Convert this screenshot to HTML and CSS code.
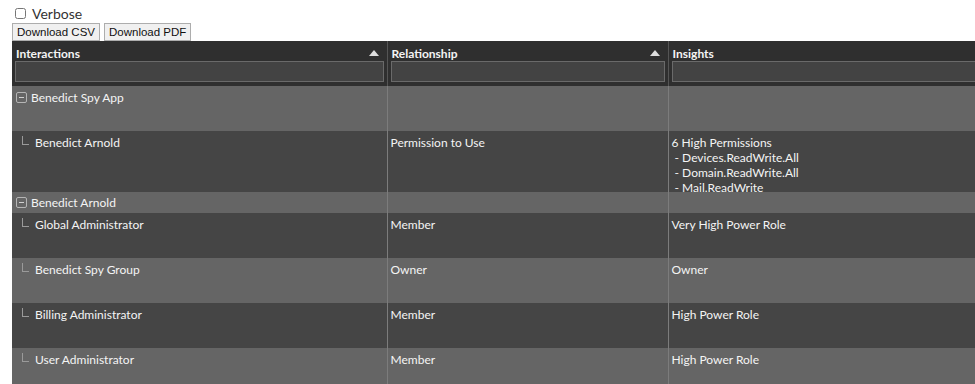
FILE: index.html
```html
<!DOCTYPE html>
<html lang="en">
<head>
  <meta charset="UTF-8" />
  <meta name="viewport" content="width=device-width, initial-scale=1" />
  <title>Interactions</title>
  <link rel="stylesheet" href="styles.css">
</head>
<body>
  <label class="verbose"><input type="checkbox" /> Verbose</label>
  <div class="toolbar">
    <button>Download CSV</button>
    <button>Download PDF</button>
  </div>
  <div class="grid">
    <table>
      <colgroup>
        <col class="c1" />
        <col class="c2" />
        <col class="c3" />
      </colgroup>
      <thead>
        <tr>
          <th><div class="title">Interactions<span class="sort"></span></div><input type="text" /></th>
          <th><div class="title">Relationship<span class="sort"></span></div><input type="text" /></th>
          <th><div class="title">Insights<span class="sort"></span></div><input type="text" /></th>
        </tr>
      </thead>
      <tbody>
        <tr class="group">
          <td><div class="cell tall"><span class="toggle"></span>Benedict Spy App</div></td>
          <td><div class="cell tall"></div></td>
          <td><div class="cell tall"></div></td>
        </tr>
        <tr class="row dark">
          <td><div class="cell big"><span class="branch"></span>Benedict Arnold</div></td>
          <td><div class="cell big">Permission to Use</div></td>
          <td><div class="cell big">6 High Permissions<br>&nbsp;- Devices.ReadWrite.All<br>&nbsp;- Domain.ReadWrite.All<br>&nbsp;- Mail.ReadWrite</div></td>
        </tr>
        <tr class="group">
          <td><div class="cell short"><span class="toggle"></span>Benedict Arnold</div></td>
          <td><div class="cell short"></div></td>
          <td><div class="cell short"></div></td>
        </tr>
        <tr class="row dark">
          <td><div class="cell"><span class="branch"></span>Global Administrator</div></td>
          <td><div class="cell">Member</div></td>
          <td><div class="cell">Very High Power Role</div></td>
        </tr>
        <tr class="row light">
          <td><div class="cell"><span class="branch"></span>Benedict Spy Group</div></td>
          <td><div class="cell">Owner</div></td>
          <td><div class="cell">Owner</div></td>
        </tr>
        <tr class="row dark">
          <td><div class="cell"><span class="branch"></span>Billing Administrator</div></td>
          <td><div class="cell">Member</div></td>
          <td><div class="cell">High Power Role</div></td>
        </tr>
        <tr class="row light">
          <td><div class="cell"><span class="branch"></span>User Administrator</div></td>
          <td><div class="cell">Member</div></td>
          <td><div class="cell">High Power Role</div></td>
        </tr>
      </tbody>
    </table>
  </div>
</body>
</html>
```

FILE: styles.css
```css
html {
  overflow: hidden;
}
body {
  margin: 0;
  padding: 6px 0 0 12px;
  font-family: Lato, "Open Sans", sans-serif;
  background: #fff;
  color: #222;
}
.verbose {
  display: flex;
  align-items: center;
  height: 14px;
  font-size: 14px;
  color: #333;
}
.verbose input {
  margin: 0 6px 0 3px;
  width: 11px;
  height: 11px;
}
.toolbar {
  display: flex;
  gap: 4px;
  margin-top: 3px;
}
.toolbar button {
  font-family: "Liberation Sans", Arial, sans-serif;
  font-size: 11.5px;
  height: 18px;
  padding: 0 4px;
  background: #f0f0f0;
  border: 1px solid #adadad;
  border-radius: 0;
  color: #111;
}
table {
  border-collapse: collapse;
  table-layout: fixed;
  width: 1000px;
  color: #f4f4f4;
  font-size: 12px;
}
.c1 { width: 375px; }
.c2 { width: 281px; }
.c3 { width: 344px; }
th {
  background: #2f2f2f;
  text-align: left;
  padding: 4px 3px 4px 3px;
  border-right: 1px solid #555;
  vertical-align: top;
}
th .title {
  display: flex;
  justify-content: space-between;
  align-items: center;
  padding-left: 1px;
  height: 16px;
  font-weight: bold;
  font-size: 12px;
}
.sort {
  width: 0;
  height: 0;
  margin-right: 5px;
  border-left: 5px solid transparent;
  border-right: 5px solid transparent;
  border-bottom: 6px solid #ddd;
}
th input {
  display: block;
  box-sizing: border-box;
  width: 100%;
  height: 21px;
  margin-top: 0;
  background: #434343;
  border: 1px solid #6a6a6a;
}
td {
  padding: 0;
  vertical-align: top;
  border-right: 1px solid #7c7c7c;
}
.group td, .light td {
  background: #656565;
}
.dark td {
  background: #454545;
}
.cell {
  box-sizing: border-box;
  height: 45px;
  padding: 4px 3px 0 3px;
  line-height: 15px;
  overflow: hidden;
  display: block;
}
.cell.tall { height: 45px; padding-top: 4px; }
.cell.big { height: 61px; }
.cell.short { height: 21px; padding-top: 3px; }
.toggle {
  display: inline-block;
  box-sizing: border-box;
  width: 11px;
  height: 11px;
  margin: 0 4px 0 1px;
  vertical-align: -1px;
  border: 1px solid #b5b5b5;
  border-radius: 2px;
  position: relative;
}
.toggle::after {
  content: "";
  position: absolute;
  left: 2px;
  right: 2px;
  top: 4px;
  height: 1px;
  background: #d0d0d0;
}
.branch {
  display: inline-block;
  width: 6px;
  height: 8px;
  margin: 0 6px 0 7px;
  vertical-align: 2px;
  border-left: 1px solid #9a9a9a;
  border-bottom: 1px solid #9a9a9a;
}
```
